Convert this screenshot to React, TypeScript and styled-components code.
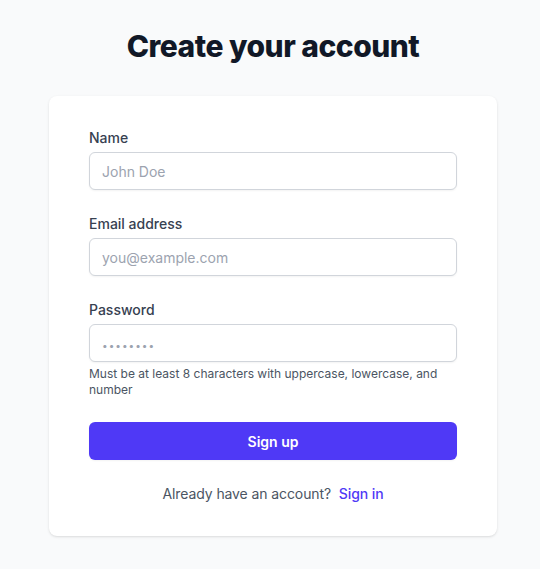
import React from "react";
import styled, { createGlobalStyle } from "styled-components";

const Global = createGlobalStyle`
  * { box-sizing: border-box; }
  html, body { margin: 0; padding: 0; }
  body {
    background: #f9fafb;
    font-family: Inter, "Noto Sans", Arial, sans-serif;
    -webkit-font-smoothing: antialiased;
  }
`;

const Page = styled.div`
  min-height: 569px;
  padding: 28px 43px 32px 49px;
  display: flex;
  flex-direction: column;
  align-items: center;
`;

const Title = styled.h2`
  margin: 0;
  font-size: 30px;
  line-height: 36px;
  font-weight: 800;
  color: #111827;
  text-align: center;
  letter-spacing: -0.5px;
`;

const Card = styled.div`
  margin-top: 32px;
  width: 448px;
  background: #ffffff;
  border-radius: 8px;
  box-shadow: 0 1px 3px 0 rgba(0, 0, 0, 0.1), 0 1px 2px -1px rgba(0, 0, 0, 0.1);
  padding: 32px 40px 32px;
`;

const Form = styled.form`
  display: flex;
  flex-direction: column;
  gap: 24px;
`;

const Field = styled.div`
  display: flex;
  flex-direction: column;
`;

const Label = styled.label`
  font-size: 14px;
  line-height: 20px;
  font-weight: 500;
  color: #374151;
`;

const Input = styled.input<{ $dots?: boolean }>`
  margin-top: 4px;
  height: 38px;
  width: 100%;
  padding: 0 12px;
  border: 1px solid #d1d5db;
  border-radius: 6px;
  box-shadow: 0 1px 2px 0 rgba(0, 0, 0, 0.05);
  font-family: inherit;
  font-size: 14px;
  color: #111827;
  background: #fff;
  outline: none;
  &::placeholder {
    color: #9ca3af;
    ${(p) => (p.$dots ? "font-size: 10px; letter-spacing: 1px;" : "")}
  }
`;

const Hint = styled.p`
  margin: 4px 0 0;
  font-size: 12px;
  line-height: 16px;
  color: #4b5563;
`;

const Button = styled.button`
  height: 38px;
  width: 100%;
  border: none;
  border-radius: 6px;
  background: #4f39f6;
  color: #ffffff;
  font-family: inherit;
  font-size: 14px;
  font-weight: 600;
  box-shadow: 0 1px 2px 0 rgba(0, 0, 0, 0.05);
  cursor: pointer;
`;

const Footer = styled.p`
  margin: 24px 0 0;
  text-align: center;
  font-size: 14px;
  line-height: 20px;
  color: #4b5563;
  letter-spacing: -0.1px;
`;

const Link = styled.a`
  margin-left: 4px;
  color: #4f39f6;
  font-weight: 500;
  text-decoration: none;
`;

export default function App() {
  return (
    <>
      <Global />
      <Page>
        <Title>Create your account</Title>
        <Card>
          <Form onSubmit={(e) => e.preventDefault()}>
            <Field>
              <Label htmlFor="name">Name</Label>
              <Input id="name" type="text" placeholder="John Doe" />
            </Field>
            <Field>
              <Label htmlFor="email">Email address</Label>
              <Input id="email" type="email" placeholder="you@example.com" />
            </Field>
            <Field>
              <Label htmlFor="password">Password</Label>
              <Input id="password" type="password" placeholder="••••••••" $dots />
              <Hint>Must be at least 8 characters with uppercase, lowercase, and number</Hint>
            </Field>
            <Button type="submit">Sign up</Button>
          </Form>
          <Footer>
            Already have an account? <Link href="#">Sign in</Link>
          </Footer>
        </Card>
      </Page>
    </>
  );
}
